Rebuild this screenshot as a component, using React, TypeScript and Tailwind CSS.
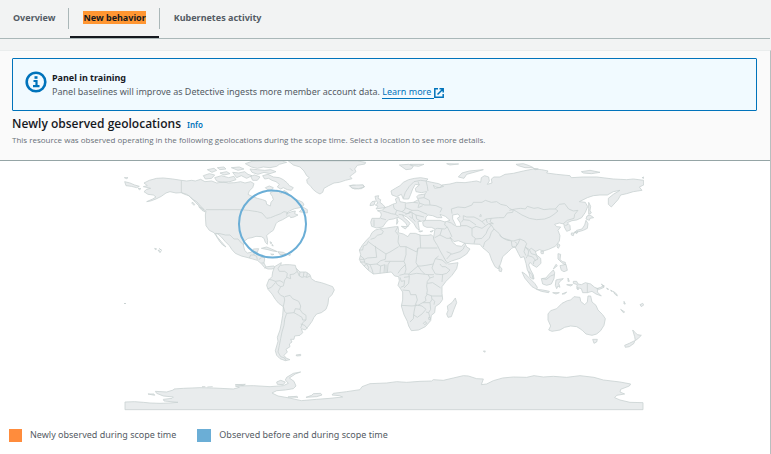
import { useState } from "react";

const LAND = "#e9eced";
const BORDER = "#c9d2d2";

/* Each region is digitised at three units per map unit, from its own origin. */
type Region = { name: string; origin: [number, number]; land: string[]; borders: string[]; water?: string[] };

const regions: Region[] = [
  {
    name: "North America",
    origin: [120, 155],
    land: [
      "M184 76L200 78 215 76 226 78 242 73 255 80 275 78 290 84 310 81 325 84 345 83 362 80 375 84 392 80 402 86 398 98 388 108 384 118 396 124 412 130 428 134 438 138 440 148 451 153 453 142 460 134 457 124 450 114 462 108 472 105 478 112 484 116 492 106 502 112 508 120 516 126 524 132 540 138 548 142 552 150 540 158 524 161 508 168 500 176 515 170 526 168 524 176 534 180 522 186 512 188 508 182 498 188 488 194 474 200 468 206 464 216 460 226 448 234 440 242 443 256 442 268 436 262 432 250 424 245 408 244 396 248 384 250 374 258 370 270 374 286 382 294 394 292 400 282 416 281 412 292 410 300 432 304 434 312 432 324 438 336 450 334 462 333 466 338 456 342 444 342 434 338 424 326 412 316 398 312 384 308 364 303 346 295 336 284 328 272 316 260 304 246 294 237 286 236 292 246 304 260 318 276 308 270 298 258 288 242 282 233 268 226 258 212 257 198 256 180 258 168 248 162 238 154 226 142 212 126 200 118 184 113 168 114 150 110 138 114 124 124 108 132 92 138 80 140 98 132 108 126 100 120 84 118 72 110 80 103 92 100 70 95 82 92 72 84 88 76 110 70 130 69 158 72Z",
      "M14 80L30 84 44 90 58 94 50 98 34 94 18 92ZM13 68L24 68 20 71ZM54 100L63 101 58 104ZM104 280L110 282 106 284ZM114 285L123 290 120 293Z",
      "M217 141L224 148 222 151 216 145ZM236 155L248 162 256 171 246 166Z",
      "M250 62L268 56 284 60 275 70 256 72ZM284 68L304 62 326 68 342 64 348 74 330 80 308 82 290 78ZM262 44L282 40 290 46 276 52ZM292 38L312 36 318 42 300 44ZM300 54L320 50 330 56 312 60ZM334 38L358 36 372 42 354 46ZM338 52L356 54 374 50 384 58 396 62 380 70 364 62 350 68Z",
      "M376 26L396 19 440 18 486 18 500 22 478 28 470 34 450 38 430 36 412 40 394 36ZM390 42L412 44 434 46 452 44 468 50 450 56 432 52 414 58 396 52ZM392 64L404 60 420 66 412 76 398 76ZM428 62L444 58 460 66 478 68 490 74 502 84 508 92 520 98 514 106 502 104 490 98 482 102 472 96 478 88 468 80 456 76 446 70 434 72ZM436 98L448 93 460 98 456 104 442 104Z",
      "M505 18L712 18 737 22 735 27 712 31 704 42 708 50 698 58 690 64 696 71 676 76 658 82 642 84 626 92 612 100 608 112 600 117 590 112 580 104 572 94 562 84 560 74 568 68 560 62 552 48 540 36 520 30Z",
      "M688 92L700 90 712 92 728 90 734 95 724 101 704 102 694 98Z",
      "M540 150L552 158 562 164 562 174 548 172 538 170 546 162Z",
      "M424 280L440 276 454 282 472 290 458 288 444 284ZM474 290L490 292 500 298 480 299ZM452 297L462 298 456 300ZM505 299L512 299 508 302ZM450 260L456 264 452 266ZM456 268L460 272 456 272Z",
    ],
    borders: [
      "M184 76L184 113 194 118 206 122 216 132 230 140 242 154 252 163",
      "M258 164L300 164 360 164 385 166 398 168 412 170 426 174 440 190 452 188 466 182 482 176 492 170 502 172 500 182",
      "M286 235L300 236 316 240 330 240 342 252 354 252 364 264 372 270",
      "M388 309L392 300 402 300 402 292 410 290M402 300L410 304 412 314M416 314L424 308 432 306M424 324L432 324M438 336L434 340",
    ],
  },
  {
    name: "South America",
    origin: [250, 240],
    land: [
      "M74 80L84 74 94 68 92 76 104 74 118 74 136 76 138 84 150 96 168 96 180 104 184 116 196 124 214 128 232 134 248 140 253 150 246 164 236 174 234 192 228 208 214 218 200 222 192 232 186 244 176 258 166 270 154 266 158 278 150 286 134 288 132 298 122 298 126 306 118 312 120 320 108 328 112 336 102 346 108 354 120 359 106 362 90 356 80 346 76 332 80 318 84 304 82 292 90 270 94 250 98 226 100 200 86 190 76 178 66 162 54 148 50 136 56 120 66 110 68 96Z",
      "M138 345L152 343 152 347 140 348Z",
    ],
    borders: [
      "M90 76L84 86 88 94 104 94 112 100 110 112 104 120 100 138 92 140 84 156 92 166 102 170 104 180 100 200 104 214 110 220 104 238 102 256 96 276 92 296 88 316 84 336 92 350 104 354",
      "M56 118L66 120 76 124 82 134 92 140M54 146L64 142 76 128M76 124L90 122 100 128",
      "M110 112L122 116 120 104 132 102 142 94 138 84M150 96L148 108 156 112 164 110 172 112 180 108M162 96L160 110M172 98L170 112M142 94L148 108",
      "M104 170L120 166 128 176 146 184 152 198 150 208 136 206 132 218 110 220M150 208L156 218 168 226 168 240 158 248 152 264M132 218L146 226 156 232 158 240 168 240M152 252L164 256 172 266",
      "M104 354L108 362",
    ],
  },
  {
    name: "Europe and Asia",
    origin: [350, 155],
    land: [
      "M123 108L136 100 150 92 160 82 176 74 194 70 212 68 234 72 228 78 246 82 266 86 281 94 268 98 256 96 250 90 254 100 272 97 276 90 300 87 320 82 345 83 365 80 380 78 392 82 394 68 404 62 416 66 418 78 412 88 426 84 424 72 432 66 450 66 465 58 490 55 520 48 550 42 575 44 594 48 590 54 620 58 660 62 664 68 700 66 740 66 790 72 830 74 850 72 881 76 881 90 868 96 876 106 850 110 830 116 812 120 804 134 784 156 775 148 775 130 790 118 810 106 790 110 772 120 750 120 730 122 712 128 688 140 706 142 713 155 706 172 695 188 680 195 666 197 652 203 660 212 661 225 650 229 643 216 642 207 628 204 614 208 620 215 632 216 624 226 630 242 628 258 616 274 596 283 580 288 568 284 556 290 560 300 572 310 573 325 560 337 548 330 540 322 536 330 542 345 550 360 552 372 542 362 532 345 528 325 522 305 512 308 505 295 495 275 485 280 475 290 458 305 452 325 445 342 435 335 425 315 418 295 408 286 398 278 390 268 370 267 345 265 325 257 312 260 300 246 308 262 320 272 335 274 344 264 350 276 360 282 350 297 330 310 305 318 290 325 284 314 275 300 264 284 254 266 250 255 252 240 255 222 244 217 230 217 220 212 218 202 226 196 246 196 270 196 285 201 300 196 286 184 270 178 276 188 262 188 248 182 234 180 228 186 226 196 214 199 204 200 206 212 208 225 200 220 192 206 182 196 170 186 158 180 162 188 172 196 180 205 173 216 168 205 156 194 144 187 130 192 116 194 108 202 98 216 80 219 65 214 62 202 66 190 90 190 94 180 92 172 82 167 98 165 104 158 116 154 128 148 140 144 136 132 146 126 150 140 170 144 190 142 205 134 200 125 206 120 225 117 230 110 214 113 198 110 196 100 208 90 196 88 188 102 182 118 176 132 160 132 154 118 140 125 126 120Z",
      "M75 124L86 122 84 130 92 134 90 142 100 150 106 158 90 160 78 162 84 154 76 150 84 144 78 136ZM66 140L76 138 72 150 60 152 62 145Z",
      "M0 92L20 90 40 90 42 96 26 101 6 99ZM148 30L176 28 190 34 184 42 168 44ZM180 28L222 28 206 34 190 32ZM290 26L326 27 300 30Z",
      "M325 66L336 54 358 48 400 44 372 52 350 58 342 70ZM498 28L520 26 538 32 550 38 525 38 505 32ZM550 40L565 42 556 44ZM694 50L720 46 750 52 724 56 700 54ZM876 68L882 66 882 70Z",
      "M141 190L144 200 140 208ZM154 214L172 215 166 222ZM206 228L218 228 210 231ZM240 230L250 226 246 231Z",
      "M716 142L722 154 720 166 724 174 716 178 716 160ZM711 183L720 180 731 188 720 190 718 196 708 192ZM708 196L714 206 712 220 700 226 686 230 672 234 680 226 696 222 704 210ZM664 234L672 234 670 242 664 240ZM674 231L684 230 680 236Z",
      "M624 266L630 270 625 280 621 276ZM572 290L580 288 580 296 574 296ZM448 332L456 342 454 350 447 348Z",
      "M624 296L632 298 630 314 638 320 646 322 646 330 634 322 624 312ZM630 332L648 328 652 346 642 350 634 346ZM618 328L622 332 610 342Z",
    ],
    borders: [
      "M160 130L166 112 178 94 192 80 212 76 228 78M208 90L204 80M228 78L232 94 234 108",
      "M225 117L222 128 238 136 240 150 258 152 276 160 270 172M222 128L205 130M205 134L208 144 204 158M208 144L224 150 240 150M205 158L218 152M190 142L204 144M166 145L166 158 186 166 204 166M204 166L222 174 232 178M186 166L178 174 166 178",
      "M130 148L132 160 140 166 136 178 146 184M140 166L156 170 164 164 166 158M156 170L170 176 184 172 198 180 222 186M146 178L160 180M98 168L112 172 124 176 136 178M92 190L108 194M72 194L72 214M186 172L188 190 196 200M198 180L200 192 212 198M178 184L186 190M176 176L180 168",
      "M286 200L284 210 292 216 284 222 262 220 256 222M292 216L300 232 306 246M276 222L270 240 254 248M270 240L290 250 302 250M292 200L304 204 314 212",
      "M290 290L304 296 290 312M304 298L330 290 340 282 344 272",
      "M306 176L304 162 324 156 345 158 366 150 370 142 396 142 406 136 424 142 440 140 452 148 470 152 478 160 490 166 488 172 472 174 462 188 446 188 424 190 408 192 396 200 384 192 372 186 350 186 340 182 340 194 334 202",
      "M490 164L500 170 516 180 538 190 560 194 584 192 600 186 612 178 624 168 616 162 600 162 582 164 564 158 552 160 532 154 526 162 512 160 496 162 478 166M616 162L628 148 644 146 656 162 670 168 684 166 674 178 672 190 652 196 640 206",
      "M332 212L350 212 366 220 378 214 396 220 416 206 424 210 432 222 448 236 454 246 472 256 490 258 510 252 524 258 530 266 526 276 538 284 544 280 558 290",
      "M366 220L366 242 376 250 372 266M376 252L396 250 408 236 414 222 424 210M404 262L400 276 M404 262L418 250 424 232 432 222M340 194L358 196 378 210M396 200L406 210M424 190L420 200 430 206 416 206M408 192L412 204",
      "M448 240L460 250 482 256M484 258L486 274 496 278 502 266 494 260M510 252L504 266 498 274M526 276L536 288 534 300 528 310M538 284L544 296 558 300 564 312 552 318 550 328M534 302L548 306 558 318M526 276L522 290 528 302M646 212L654 208",
      "M0 40L8 48",
    ],
    water: ["M308 180L324 177 330 184 322 190 331 204 332 214 318 214 314 204 308 192Z", "M392 178L394 184 389 184Z"],
  },
  {
    name: "Africa",
    origin: [350, 220],
    land: [
      "M76 30L92 26 110 24 136 20 144 20 146 32 144 38 160 42 174 50 180 40 196 40 212 46 234 46 244 44 250 50 252 60 262 76 270 92 278 106 288 124 296 132 324 128 320 146 306 166 288 184 276 200 276 220 278 238 270 250 256 260 254 278 244 286 242 302 226 320 206 330 184 332 176 318 172 304 162 284 154 258 158 240 158 216 150 204 144 196 148 182 146 170 134 168 124 156 106 158 90 160 70 162 54 150 42 138 32 126 28 118 32 104 28 90 38 74 50 60 60 50 66 38Z",
      "M316 234L320 248 312 268 304 290 294 292 290 282 294 272 292 258 306 248Z",
    ],
    borders: [
      "M90 26L100 34 96 42 82 46 74 54 62 58M56 62L50 74 40 78 38 90 28 90M56 66L78 82 108 102 120 96 146 80M76 78L80 112 52 114 44 118 30 106M144 20L136 34 146 46 144 66 150 80 168 80 200 96 204 84 212 84 210 44M212 84L262 84M204 84L200 110 198 128 204 138 214 138 228 136 250 132 256 116 266 108M168 80L168 104 162 124 120 124 104 124M108 102L106 118 92 122 80 132 60 134 42 128M30 118L42 118 44 126 30 126M42 138L50 132 56 142 54 150M60 134L66 148 70 162M80 132L92 138 90 160M92 138L104 134 102 158M108 134L108 158M120 124L114 134 112 158M162 124L166 134 152 148 144 160M166 134L168 148 164 162 148 166M164 162L176 162 192 148 204 138M176 162L178 170 162 172M150 172L154 184 164 182 162 198 152 202M178 170L176 190 162 204M178 164L200 160 218 162 234 164 240 174 232 184 230 198 232 212 230 222M204 138L214 152 224 162 M250 132L246 144 256 162 276 164 290 160 300 150 286 140 276 140 270 132M256 116L276 120 290 132M234 164L252 164M278 164L276 186M232 190L248 188 272 204M240 174L252 170M158 210L178 212 182 224 198 224 202 240 196 254 204 256 218 248 228 242 226 232 232 222M230 222L246 228 276 228M154 256L186 258 202 256M196 256L192 276 190 296 180 306M190 284L202 292 216 282 228 268 216 258 204 256M218 248L240 248 242 268 236 278 228 276M240 248L246 238 244 228M236 278L240 294M246 236L254 244 252 254M220 310L226 304 230 310 224 314 220 310M236 292L242 294 240 300 236 298 236 292",
    ],
  },
  {
    name: "Oceania",
    origin: [480, 220],
    land: [
      "M204 282L212 272 230 266 246 250 262 242 272 240 282 230 300 232 302 244 314 254 322 246 324 228 332 228 336 246 348 256 354 270 368 284 376 296 372 316 362 332 350 342 336 346 318 342 308 332 300 326 290 320 272 318 254 322 240 330 216 334 206 330 212 318 204 300Z",
      "M338 358L352 358 350 366 342 370ZM458 330L466 338 472 344 484 346 476 354 466 362 464 350ZM464 362L462 370 448 380 436 382 434 376 448 370Z",
      "M126 156L136 162 150 176 164 190 172 202 170 208 156 200 144 186 134 174ZM146 154L156 164 160 178 150 172ZM170 208L188 210 208 214 206 218 184 214ZM184 176L198 174 206 164 220 150 224 158 222 176 214 192 200 196 188 192ZM228 180L236 178 250 176 240 184 236 190 240 202 234 198 230 206 226 196ZM264 174L268 184 264 184ZM260 194L278 194 272 198ZM218 218L238 218 228 222ZM246 222L260 216 254 222ZM280 184L290 184 294 192 304 194 316 188 332 192 344 202 354 206 352 216 364 228 348 222 336 214 322 218 308 218 304 206 290 202 292 194 280 190Z",
      "M350 206L362 202 372 196 372 202 358 208ZM364 192L372 198 370 200ZM380 204L386 208 382 208ZM392 210L398 214 394 214ZM400 214L410 222 412 228 404 222ZM432 244L436 252 432 252ZM422 268L434 276 430 278ZM480 254L488 250 492 254 484 260ZM10 393L16 393 14 397ZM290 204L296 206 294 210Z",
    ],
    borders: ["M322 190L322 218", "M186 176L200 178 212 168 222 164"],
  },
  {
    name: "Antarctica",
    origin: [120, 340],
    land: [
      "M15 209L15 186 44 185 70 187 90 189 120 190 150 189 174 187 132 183 130 178 156 175 160 171 130 168 110 160 106 154 140 156 160 150 162 147 190 145 240 143 280 144 340 147 358 142 346 138 400 137 450 140 490 137 505 130 496 120 500 112 520 100 542 96 526 102 508 114 522 124 528 138 520 146 496 150 470 152 456 159 474 168 508 174 544 182 590 178 630 175 668 171 658 167 636 165 640 160 680 155 720 149 726 140 750 131 800 129 830 125 860 127 900 124 935 123 940 119 970 121 1000 114 1030 107 1045 108 1070 116 1090 117 1084 134 1100 132 1120 122 1148 114 1180 111 1220 112 1242 107 1270 111 1300 109 1340 112 1380 107 1422 112 1450 120 1500 126 1532 132 1528 138 1502 148 1500 156 1514 162 1490 166 1484 173 1500 180 1530 187 1569 188 1569 209Z",
      "M558 172L575 166 580 161 602 160 606 165 590 170ZM504 171L530 169 534 172ZM84 162L102 162 104 166ZM346 134L376 133 370 137ZM246 140L256 140M262 141L278 140",
      "M470 126L482 121 496 126 490 134 472 133Z",
    ],
    borders: [],
  },
];

function WorldMap() {
  return (
    <svg viewBox="124 161 520 250" role="img" aria-label="World map of observed geolocations" className="block h-auto w-[520px] max-w-full">
      {regions.map((r) => (
        <g
          key={r.name}
          transform={`translate(${r.origin[0]} ${r.origin[1]}) scale(0.33333)`}
          stroke={BORDER}
          strokeWidth={2.4}
          strokeLinejoin="round"
        >
          <path d={r.land.join("")} fill={LAND} />
          <path d={r.borders.join("")} fill="none" />
          {r.water && <path d={r.water.join("")} fill="#fff" />}
        </g>
      ))}
      <path d="M124 303.500h2M159 248.500l3 2" stroke={BORDER} fill="none" />
      <circle cx="272.500" cy="224" r="33.500" fill="none" stroke="#6baed6" strokeWidth="2" />
    </svg>
  );
}

const tabs = ["Overview", "New behavior", "Kubernetes activity"];

function Tabs() {
  const [active, setActive] = useState(1);
  return (
    <div role="tablist" className="mr-px flex h-[39px] border-b border-[#aab7b8]">
      {tabs.map((label, i) => (
        <div key={label} className="flex">
          <button
            type="button"
            role="tab"
            aria-selected={i === active}
            onClick={() => setActive(i)}
            className={
              i === active
                ? "h-[38px] border-b-2 border-[#16191f] px-[13px] text-[9px] leading-4 font-bold text-[#16191f]"
                : "h-[38px] border-b-2 border-transparent px-[13px] text-[9px] leading-4 font-bold text-[#545b64]"
            }
          >
            {i === active ? <mark className="bg-[#ff9632] text-inherit">{label}</mark> : label}
          </button>
          {i < tabs.length - 1 && <span className="mt-2 mr-px h-[21px] w-px bg-[#aab7b8]" />}
        </div>
      ))}
    </div>
  );
}

function InfoIcon() {
  return (
    <svg viewBox="0 0 22 22" className="size-[22px] shrink-0" fill="none" stroke="#0073bb" aria-hidden="true">
      <circle cx="11" cy="11" r="9.300" strokeWidth="2.600" />
      <path d="M8.500 10H11.500V15M8 15.200H14.500" strokeWidth="2.200" />
      <path d="M9.500 6.500h3" strokeWidth="2.600" />
    </svg>
  );
}

function ExternalIcon() {
  return (
    <svg viewBox="0 0 10 10" className="size-[10px]" fill="none" stroke="#0073bb" strokeWidth="1.500" aria-hidden="true">
      <path d="M4 .8H.8V9.200H9.200V6M5.500 .8H9.200V4.500M9 1L3.500 6.500" />
    </svg>
  );
}

export default function App() {
  return (
    <div className="flex min-h-screen flex-col bg-[#f2f3f3] font-['Noto_Sans','Open_Sans',sans-serif] text-[9px] leading-[14px] text-[#545b64]">
      <Tabs />
      <main className="mt-[11px] flex-1 border-t border-r border-t-[#eaeded] border-r-[#b8bfbf] bg-white">
        <header className="border-b border-[#95a5a6] bg-[#fafafa] px-3 pt-[7px] pb-[13px]">
          <div className="mr-px flex h-[53px] gap-[5px] rounded-[1px] border border-[#0073bb] bg-[#f1faff] pt-3 pl-[12px]">
            <InfoIcon />
            <div>
              <p className="font-bold text-[#16191f]">Panel in training</p>
              <p>
                Panel baselines will improve as Detective ingests more member account data.{" "}
                <a href="#learn-more" className="inline-flex items-center text-[#0073bb]">
                  <span className="border-b border-[#0073bb] leading-3">Learn more&nbsp;</span>
                  <ExternalIcon />
                </a>
              </p>
            </div>
          </div>
          <div className="mt-[5px] flex items-baseline gap-[6px]">
            <h2 className="font-['Open_Sans',sans-serif] text-[12px] leading-4 font-semibold text-[#16191f]">Newly observed geolocations</h2>
            <a href="#info" className="text-[8px] font-semibold text-[#0073bb]">Info</a>
          </div>
          <p className="mt-px font-['Open_Sans',sans-serif] text-[8px] leading-[14px] text-[#687078]">
            This resource was observed operating in the following geolocations during the scope time. Select a location to see more details.
          </p>
        </header>
        <div className="flex justify-center pr-0.5">
          <WorldMap />
        </div>
        <ul className="mt-[17px] flex gap-[21px] pl-[9px]">
          <li className="flex items-center gap-2">
            <span className="size-[13px] bg-[#ff8c3c]" />
            Newly observed during scope time
          </li>
          <li className="flex items-center gap-2">
            <span className="h-[13px] w-[14px] bg-[#6baed6]" />
            Observed before and during scope time
          </li>
        </ul>
      </main>
    </div>
  );
}
